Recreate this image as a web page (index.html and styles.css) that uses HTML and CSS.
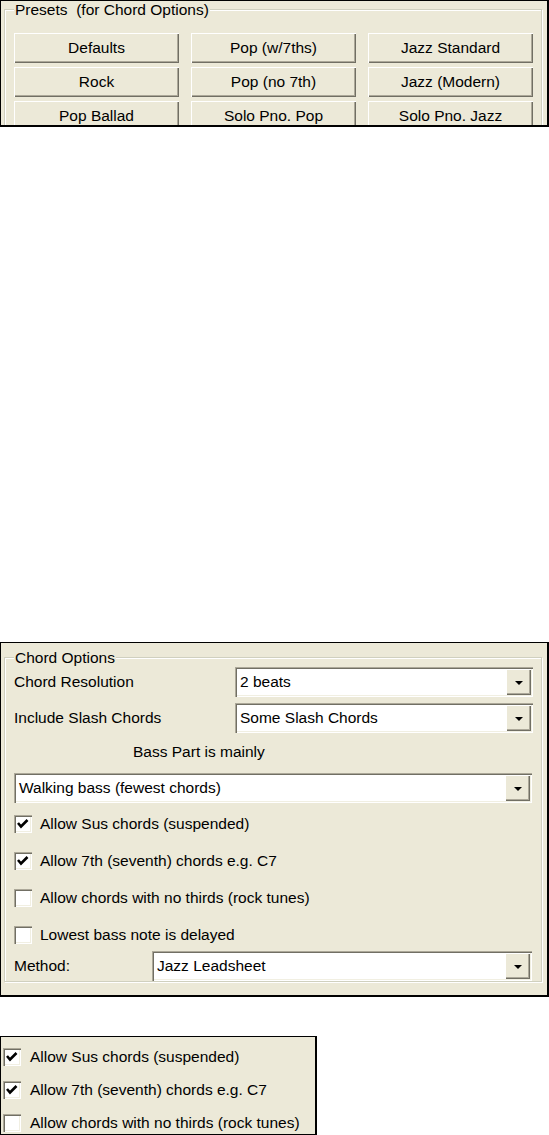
FILE: index.html
```html
<!DOCTYPE html>
<html lang="en">
<head>
    <meta charset="UTF-8">
    <title>Chord Options</title>
    <link rel="stylesheet" href="styles.css">
</head>
<body>

<!-- Presets box -->
<div class="frame presets-frame">
    <fieldset class="group">
        <legend>Presets&nbsp;&nbsp;(for Chord Options)</legend>
        <div class="preset-grid">
            <button>Defaults</button>
            <button>Pop (w/7ths)</button>
            <button>Jazz Standard</button>
            <button>Rock</button>
            <button>Pop (no 7th)</button>
            <button>Jazz (Modern)</button>
            <button>Pop Ballad</button>
            <button>Solo Pno. Pop</button>
            <button>Solo Pno. Jazz</button>
        </div>
    </fieldset>
</div>

<!-- Chord options box -->
<div class="frame options-frame">
    <fieldset class="group">
        <legend>Chord Options</legend>

        <div class="field-row">
            <span class="label">Chord Resolution</span>
            <div class="combo"><span class="combo-text">2 beats</span><span class="combo-btn"><i class="arrow"></i></span></div>
        </div>
        <div class="field-row">
            <span class="label">Include Slash Chords</span>
            <div class="combo"><span class="combo-text">Some Slash Chords</span><span class="combo-btn"><i class="arrow"></i></span></div>
        </div>

        <div class="bass-label">Bass Part is mainly</div>
        <div class="combo combo-wide"><span class="combo-text">Walking bass (fewest chords)</span><span class="combo-btn"><i class="arrow"></i></span></div>

        <div class="checks">
            <div class="check-row"><span class="check checked"><svg width="18" height="18" viewBox="0 0 18 18"><polyline points="4,8 7,11.5 13.5,5" /></svg></span>Allow Sus chords (suspended)</div>
            <div class="check-row"><span class="check checked"><svg width="18" height="18" viewBox="0 0 18 18"><polyline points="4,8 7,11.5 13.5,5" /></svg></span>Allow 7th (seventh) chords e.g. C7</div>
            <div class="check-row"><span class="check"></span>Allow chords with no thirds (rock tunes)</div>
            <div class="check-row"><span class="check"></span>Lowest bass note is delayed</div>
        </div>

        <div class="field-row method-row">
            <span class="label">Method:</span>
            <div class="combo"><span class="combo-text">Jazz Leadsheet</span><span class="combo-btn"><i class="arrow"></i></span></div>
        </div>
    </fieldset>
</div>

<!-- Cropped checkboxes -->
<div class="frame small-frame">
    <div class="check-row"><span class="check checked"><svg width="18" height="18" viewBox="0 0 18 18"><polyline points="4,8 7,11.5 13.5,5" /></svg></span>Allow Sus chords (suspended)</div>
    <div class="check-row"><span class="check checked"><svg width="18" height="18" viewBox="0 0 18 18"><polyline points="4,8 7,11.5 13.5,5" /></svg></span>Allow 7th (seventh) chords e.g. C7</div>
    <div class="check-row"><span class="check"></span>Allow chords with no thirds (rock tunes)</div>
</div>

</body>
</html>
```

FILE: styles.css
```css
body {
    margin: 0;
    background: #fff;
    color: #000;
    font-family: "Liberation Sans", Arial, sans-serif;
    font-size: 15.5px;
}

.frame {
    box-sizing: border-box;
    background: #ece9d8;
    border: 1px solid #000;
    border-right-width: 2px;
    border-bottom-width: 2px;
    overflow: hidden;
}

.group {
    margin: 0;
    padding: 0 8px 0 9px;
    border: 1px solid #d0d0bf;
    box-shadow: inset 1px 1px 0 #fff, 1px 1px 0 #fff;
}

.group legend {
    padding: 0 1px;
    line-height: 17px;
    background: #ece9d8;
}

/* presets */

.presets-frame {
    width: 549px;
    height: 127px;
    padding: 0 5px 0 3px;
}

.presets-frame .group {
    height: 140px;
}

.preset-grid {
    display: grid;
    grid-template-columns: repeat(3, 165px);
    grid-auto-rows: 30px;
    column-gap: 12px;
    row-gap: 4px;
    margin-top: 15px;
}

button {
    font: inherit;
    color: #000;
    background: #ece9d8;
    border: none;
    padding: 0;
    box-shadow: inset 1px 1px 0 #fff, inset -1px -1px 0 #716f64, inset -2px -2px 0 #aca899;
}

/* chord options */

.options-frame {
    width: 549px;
    height: 355px;
    margin-top: 515px;
    padding: 6px 5px 0 3px;
}

.options-frame .group {
    height: 333px;
    box-sizing: border-box;
}

.field-row {
    display: grid;
    grid-template-columns: 221px 298px;
    align-items: center;
    margin-top: 1px;
    margin-bottom: 6px;
}

.method-row {
    grid-template-columns: 138px 380px;
    margin-top: -2px;
}

.combo {
    display: flex;
    height: 30px;
    box-sizing: border-box;
    padding: 2px;
    background: #fff;
    box-shadow: inset 1px 1px 0 #aca899, inset 2px 2px 0 #716f64, inset -1px -1px 0 #fff, inset -2px -2px 0 #f1efe2;
}

.combo-wide {
    width: 518px;
}

.combo-text {
    flex: 1;
    padding-left: 3px;
    line-height: 26px;
    white-space: nowrap;
}

.combo-btn {
    width: 25px;
    display: flex;
    align-items: center;
    justify-content: center;
    background: #ece9d8;
    box-shadow: inset 1px 1px 0 #fff, inset -1px -1px 0 #716f64, inset -2px -2px 0 #aca899;
}

.arrow {
    width: 0;
    height: 0;
    border-left: 4px solid transparent;
    border-right: 4px solid transparent;
    border-top: 4px solid #000;
    margin-top: 1px;
}

.bass-label {
    padding-left: 119px;
    line-height: 20px;
    margin: 9px 0 11px;
}

.checks {
    margin-top: 2px;
}

.check-row {
    display: flex;
    align-items: center;
    gap: 8px;
    height: 37px;
    white-space: nowrap;
}

.check {
    width: 18px;
    height: 18px;
    flex: none;
    background: #fff;
    box-shadow: inset 1px 1px 0 #aca899, inset 2px 2px 0 #716f64, inset -1px -1px 0 #fff, inset -2px -2px 0 #f1efe2;
}

.check polyline {
    fill: none;
    stroke: #000;
    stroke-width: 2.6;
}

/* cropped checkbox list */

.small-frame {
    width: 317px;
    height: 100px;
    margin-top: 39px;
    padding: 11px 0 0 2px;
}

.small-frame .check-row {
    height: 18px;
    gap: 9px;
    margin-bottom: 15px;
}
```
